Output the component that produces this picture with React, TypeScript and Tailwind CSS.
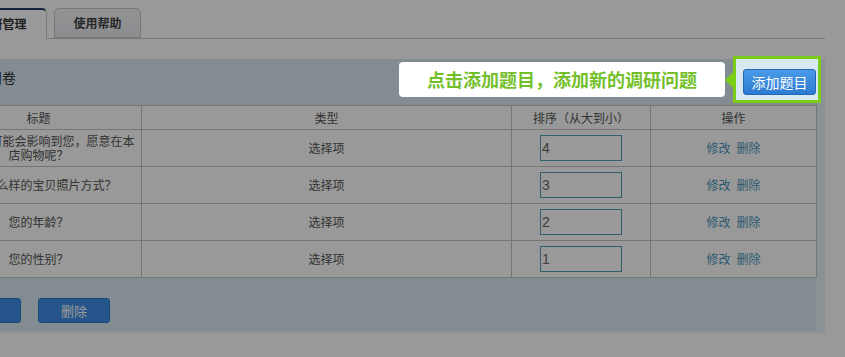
import React from "react";

const rows = [
  { title: "运费高低可能会影响到您，愿意在本店购物呢？", type: "选择项", order: "4" },
  { title: "喜欢什么样的宝贝照片方式？", type: "选择项", order: "3" },
  { title: "您的年龄？", type: "选择项", order: "2" },
  { title: "您的性别？", type: "选择项", order: "1" },
];

export default function App() {
  return (
    <div className="relative w-[845px] h-[357px] overflow-hidden bg-white font-['Noto_Sans_CJK_SC',sans-serif] text-[#555]">
      <div className="ml-[-74px] w-[899px] pt-2">
        {/* tabs */}
        <div className="flex gap-[7px] h-[31px] pl-[32px] border-b border-[#c6c6c6]">
          <div className="w-[89px] h-[31px] flex items-center justify-center rounded-t-[5px] border border-[#c6c6c6] border-t-2 border-t-[#1e3a63] border-b-white bg-white text-[12px] font-bold text-[#333]">
            调研管理
          </div>
          <div className="w-[87px] h-[30px] flex items-center justify-center rounded-t-[5px] border border-[#c6c6c6] bg-gradient-to-b from-[#f4f5f7] to-[#e8eaee] text-[12px] font-bold text-[#444]">
            使用帮助
          </div>
        </div>

        {/* panel */}
        <div className="mt-[20px] bg-[#d9eaf2] pl-[9px] border-r-[9px] border-r-[#e7f3f8] border-b-2 border-b-[#e7f3f8]">
          <div className="h-[46px] flex justify-between">
            <div className="pl-[25px] pt-[8px] text-[14px] text-[#333]">调研问卷</div>
            <div className="relative z-20 mt-[10px] h-[26px]">
              <div className="absolute -left-[10px] -right-[5px] -top-[13px] -bottom-[8px] border-[3px] border-[#7bcb1a] bg-[#d9e9f1]">
                <div className="absolute -left-[11px] top-[13px] w-0 h-0 border-y-[8px] border-y-transparent border-r-[8px] border-r-[#7bcb1a]" />
              </div>
              <div className="absolute right-full mr-[18px] -top-[7px] w-[326px] h-[35px] rounded-[4px] bg-white flex items-center justify-center text-[18px] font-bold text-[#73c02a] whitespace-nowrap">
                点击添加题目，添加新的调研问题
              </div>
              <button className="relative w-[73px] h-[26px] rounded-[3px] border border-[#2467b4] bg-gradient-to-b from-[#4a9be8] to-[#2c7bd2] text-[14px] text-white leading-none">
                添加题目
              </button>
            </div>
          </div>

          <table className="w-[881px] border-collapse bg-white text-[12px] table-fixed">
            <colgroup>
              <col className="w-[206px]" />
              <col className="w-[370px]" />
              <col className="w-[139px]" />
              <col className="w-[166px]" />
            </colgroup>
            <thead>
              <tr className="h-[24px]">
                <th className="border border-[#c4c4c4] font-normal">标题</th>
                <th className="border border-[#c4c4c4] font-normal">类型</th>
                <th className="border border-[#c4c4c4] font-normal">排序（从大到小）</th>
                <th className="border border-[#c4c4c4] font-normal">操作</th>
              </tr>
            </thead>
            <tbody>
              {rows.map((r) => (
                <tr key={r.order} className="h-[37px]">
                  <td className="border border-[#c4c4c4] px-[6px] text-center leading-[14px]">{r.title}</td>
                  <td className="border border-[#c4c4c4] text-center">{r.type}</td>
                  <td className="border border-[#c4c4c4] text-center">
                    <input
                      readOnly
                      value={r.order}
                      className="w-[82px] h-[26px] border border-[#4f9db6] bg-white px-px text-[14px] text-[#666] align-middle font-['Liberation_Sans',sans-serif]"
                    />
                  </td>
                  <td className="border border-[#c4c4c4] text-center">
                    <a className="text-[#4a97bd] mr-[6px]">修改</a>
                    <a className="text-[#4a97bd]">删除</a>
                  </td>
                </tr>
              ))}
            </tbody>
          </table>

          <div className="flex gap-[17px] pl-[14px] pt-[20px] pb-[8px]">
            <button className="w-[72px] h-[25px] rounded-[3px] border border-[#2e78c8] bg-[#3f8ee6] text-[13px] text-white">保存</button>
            <button className="w-[72px] h-[25px] rounded-[3px] border border-[#2e78c8] bg-[#3f8ee6] text-[13px] text-white">删除</button>
          </div>
        </div>
      </div>

      {/* guide mask */}
      <div className="absolute inset-0 z-10 bg-black/40" />
    </div>
  );
}
